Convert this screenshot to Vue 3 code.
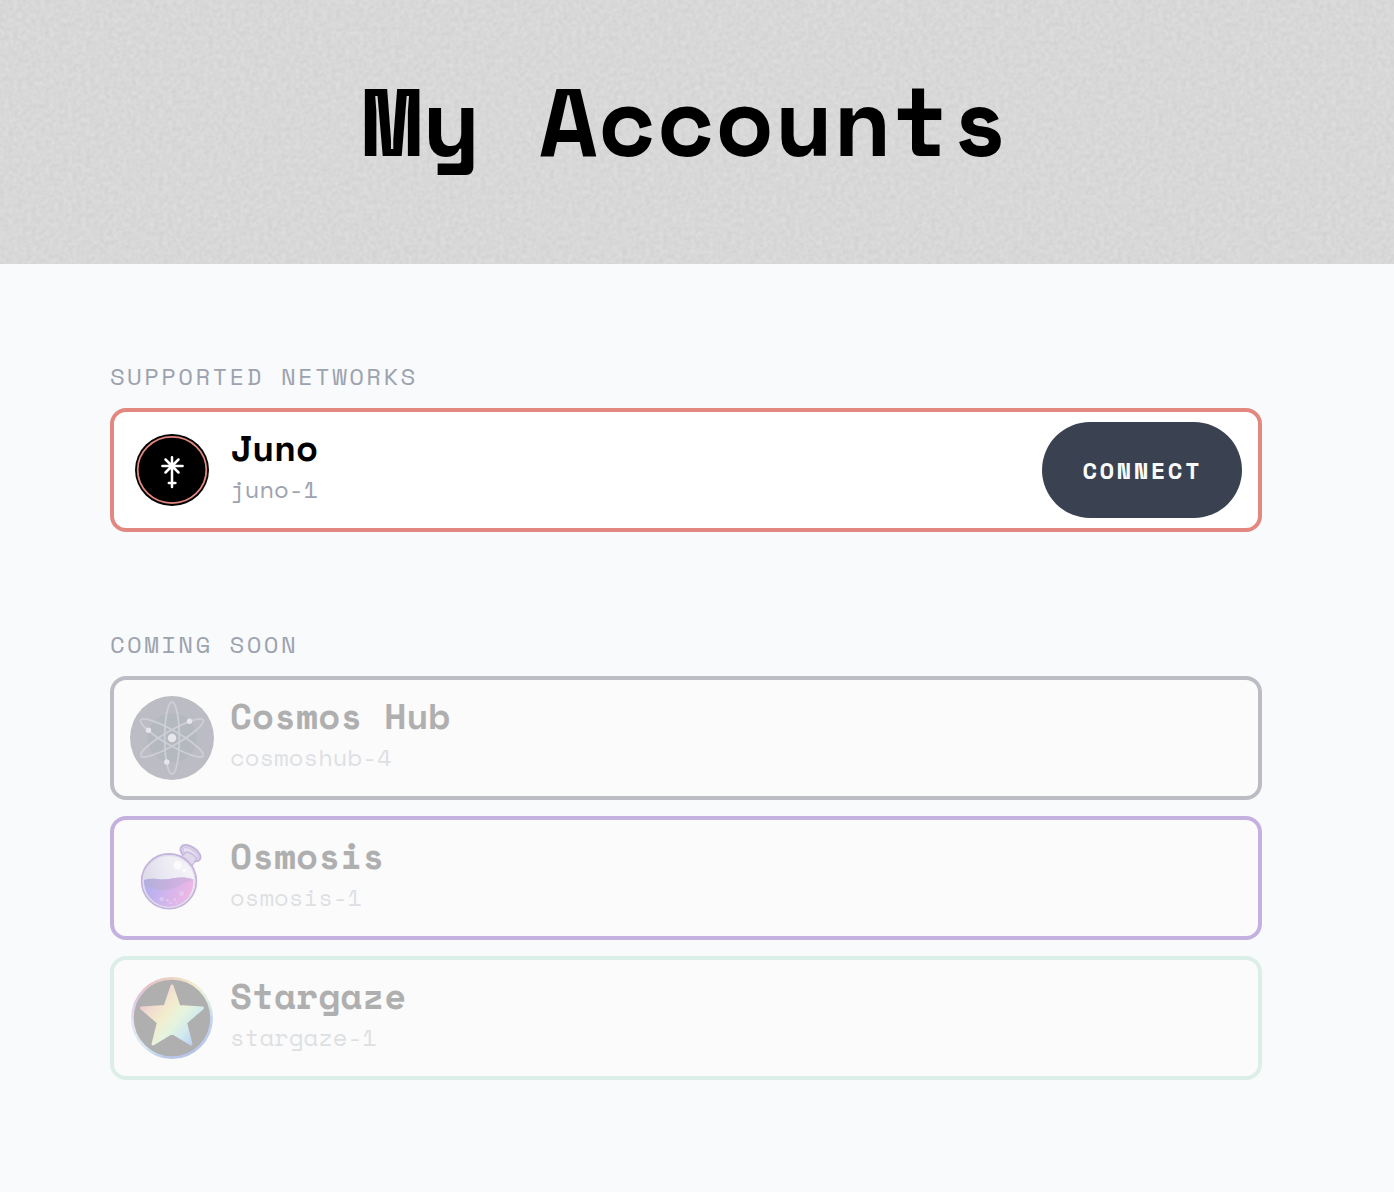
<script setup>
const sections = [
  {
    title: 'Supported Networks',
    networks: [{ id: 'juno-1', name: 'Juno', logo: 'juno', available: true }],
  },
  {
    title: 'Coming Soon',
    networks: [
      { id: 'cosmoshub-4', name: 'Cosmos Hub', logo: 'cosmos', available: false },
      { id: 'osmosis-1', name: 'Osmosis', logo: 'osmosis', available: false },
      { id: 'stargaze-1', name: 'Stargaze', logo: 'stargaze', available: false },
    ],
  },
]
</script>

<template>
  <div class="page">
    <header class="hero">
      <svg class="grain" aria-hidden="true">
        <filter id="grain" x="0" y="0" width="100%" height="100%" color-interpolation-filters="sRGB">
          <feTurbulence type="fractalNoise" baseFrequency="0.22" numOctaves="2" seed="4" />
          <feColorMatrix
            values="0.07 0 0 0 0.811
                    0.07 0 0 0 0.811
                    0.07 0 0 0 0.811
                    0 0 0 0 1"
          />
        </filter>
        <rect width="100%" height="100%" filter="url(#grain)" />
      </svg>
      <h1>My Accounts</h1>
    </header>

    <main class="content">
      <section v-for="section in sections" :key="section.title" class="section">
        <h2>{{ section.title }}</h2>
        <ul class="list">
          <li
            v-for="network in section.networks"
            :key="network.id"
            class="card"
            :class="[network.logo, { disabled: !network.available }]"
          >
            <svg v-if="network.logo === 'juno'" class="logo" viewBox="0 0 84 84" aria-hidden="true">
              <ellipse cx="42" cy="42" rx="37" ry="36" fill="#000" />
              <ellipse cx="42" cy="42" rx="34.3" ry="33.1" fill="none" stroke="#e28880" stroke-width="1.8" />
              <path
                d="M42 29.3V59M32.4 38h20.2M35.5 31.5l13 13M48.5 31.5l-13 13M38.8 55h6.6"
                fill="none"
                stroke="#fff"
                stroke-width="2.5"
                stroke-linecap="round"
              />
            </svg>

            <svg v-else-if="network.logo === 'cosmos'" class="logo" viewBox="0 0 84 84" aria-hidden="true">
              <circle cx="42" cy="42" r="42" fill="#2e3148" />
              <circle cx="42" cy="42" r="24.5" fill="#121e36" />
              <g fill="none" stroke="#666986" stroke-width="1.8">
                <ellipse cx="42" cy="42" rx="7.3" ry="36" />
                <ellipse cx="42" cy="42" rx="7.3" ry="36" transform="rotate(60 42 42)" />
                <ellipse cx="42" cy="42" rx="7.3" ry="36" transform="rotate(-60 42 42)" />
              </g>
              <g fill="#b7b9c8">
                <circle cx="42" cy="42" r="4.3" />
                <circle cx="59.5" cy="25.3" r="2.7" />
                <circle cx="18.5" cy="34.3" r="2.7" />
                <circle cx="36.8" cy="66" r="2.7" />
              </g>
            </svg>

            <svg v-else-if="network.logo === 'osmosis'" class="logo" viewBox="0 0 84 84" aria-hidden="true">
              <defs>
                <linearGradient id="glass" x1="0" y1="0.3" x2="1" y2="0">
                  <stop offset="0" stop-color="#9c93c4" />
                  <stop offset="0.45" stop-color="#d0cbe6" />
                  <stop offset="1" stop-color="#f0eefa" />
                </linearGradient>
                <linearGradient id="liquid" x1="0" y1="0.3" x2="1" y2="0.5">
                  <stop offset="0" stop-color="#0800d8" />
                  <stop offset="0.45" stop-color="#6a14d0" />
                  <stop offset="1" stop-color="#e01cb4" />
                </linearGradient>
                <linearGradient id="surface" x1="0" y1="0" x2="1" y2="0">
                  <stop offset="0" stop-color="#0c0090" />
                  <stop offset="1" stop-color="#9410ac" />
                </linearGradient>
              </defs>
              <ellipse
                cx="60.5" cy="17.2" rx="11.3" ry="6.4" transform="rotate(34 60.5 17.2)"
                fill="#8d78be" stroke="#4a0ca0" stroke-width="1.8"
              />
              <ellipse
                cx="60.5" cy="17.2" rx="8.6" ry="3.6" transform="rotate(34 60.5 17.2)"
                fill="#b5a8d6" stroke="#7a4bb5" stroke-width="1"
              />
              <path d="M51 21 56.5 16Q63 17 66.5 22.5L62 30Z" fill="#a08fc8" stroke="#5a1fa8" stroke-width="1.3" />
              <circle cx="39" cy="45.3" r="27.3" fill="url(#glass)" stroke="#4a0ca0" stroke-width="1.8" />
              <path
                d="M14 44Q22 42 31 43.5C42 44 50 38.5 63.5 43.5Q64 53 58.5 61.5 50 71 39 71T19.5 61.5Q13.5 53 14 44Z"
                fill="url(#liquid)"
              />
              <path
                d="M14 44Q22 42 31 43.5C42 44 50 38.5 63.5 43.5C58 45 53 48 47 51C36 56 22 54 15.5 49Z"
                fill="url(#surface)"
              />
              <circle cx="39" cy="45.3" r="25.9" fill="none" stroke="#9c98c0" stroke-width="1.1" />
              <g fill="#fff">
                <circle cx="47.7" cy="29.3" r="4.2" />
                <circle cx="54.5" cy="34.7" r="1.9" />
              </g>
              <g fill="#c994ee" opacity="0.5">
                <circle cx="31.8" cy="63" r="2.3" />
                <circle cx="37.5" cy="64.5" r="1.4" />
                <circle cx="40.5" cy="67" r="1.3" />
                <circle cx="44.5" cy="63.7" r="1.4" />
                <circle cx="46.5" cy="66.5" r="1" />
                <circle cx="51.5" cy="57.5" r="2.4" />
              </g>
            </svg>

            <span v-else class="logo halo">
              <svg viewBox="1 1 82 82" aria-hidden="true">
                <defs>
                  <linearGradient id="star" gradientUnits="userSpaceOnUse" x1="14" y1="22" x2="66" y2="64">
                    <stop offset="0" stop-color="#c8506e" />
                    <stop offset="0.2" stop-color="#e09a6c" />
                    <stop offset="0.4" stop-color="#e0d06a" />
                    <stop offset="0.6" stop-color="#b4e6a0" />
                    <stop offset="0.78" stop-color="#78c8d2" />
                    <stop offset="1" stop-color="#2f6fe6" />
                  </linearGradient>
                </defs>
                <circle cx="42" cy="42" r="38.3" fill="#000" />
                <path
                  d="M42 10 49 30.5 72.5 32 55.6 46.5 61 68 42 56.5 23 68 28.4 46.5 11.5 32 35 30.5Z"
                  fill="url(#star)"
                  stroke="url(#star)"
                  stroke-width="3"
                  stroke-linejoin="round"
                />
              </svg>
            </span>

            <div class="details">
              <h3>{{ network.name }}</h3>
              <p>{{ network.id }}</p>
            </div>
            <button v-if="network.available" type="button" class="connect">Connect</button>
          </li>
        </ul>
      </section>
    </main>
  </div>
</template>

<style>
body {
  margin: 0;
  background: #f9fafc;
}
</style>

<style scoped>
.page {
  font-family: "Space Mono", "DejaVu Sans Mono", monospace;
  color: #000;
}

h1,
h2,
h3,
p,
ul {
  margin: 0;
  padding: 0;
}

.hero {
  position: relative;
  padding: 72px 22px 96px 0;
  background: #d8d8d8;
  text-align: center;
}

.grain {
  position: absolute;
  inset: 0;
  width: 100%;
  height: 100%;
}

h1 {
  position: relative;
  font-size: 96px;
  line-height: 96px;
  font-weight: 700;
}

.content {
  display: flex;
  flex-direction: column;
  gap: 96px;
  padding: 96px 132px 112px 110px;
}

h2 {
  margin-bottom: 16px;
  color: #9ca3af;
  font-size: 24px;
  line-height: 32px;
  font-weight: 400;
  letter-spacing: 0.1em;
  text-transform: uppercase;
}

.list {
  display: flex;
  flex-direction: column;
  gap: 16px;
  list-style: none;
}

.card {
  position: relative;
  display: flex;
  align-items: center;
  gap: 16px;
  min-height: 116px;
  padding: 0 16px;
  border: 4px solid;
  border-radius: 16px;
  background: #fff;
}

/* Veil that fades networks which cannot be connected yet */
.card.disabled::after {
  content: "";
  position: absolute;
  inset: -6px;
  border-radius: 18px;
  background: rgba(250, 250, 250, 0.7);
}

.card.juno {
  border-color: #e28880;
}

.card.cosmos {
  border-color: #2e3148;
}

.card.osmosis {
  border-color: #4a08a4;
}

.card.stargaze {
  border-color: #94d4bc;
}

.logo {
  flex: none;
  display: block;
  box-sizing: border-box;
  width: 84px;
  height: 84px;
}

.halo {
  padding: 1px;
  border-radius: 50%;
  background: conic-gradient(#c87846, #e0d06a 35deg, #a0d8b0 65deg, #4678dc 95deg, #1446be 150deg, #285ac8 190deg, #8cc8dc 225deg, #c0a8e4 265deg, #a05ab4 295deg, #b44650 325deg, #c87846) content-box;
}

.halo svg {
  display: block;
}

.details {
  flex: 1;
  padding-bottom: 2px;
}

h3 {
  font-size: 36px;
  line-height: 40px;
  font-weight: 700;
}

.details p {
  color: #9ca3af;
  font-size: 24px;
  line-height: 42px;
}

.connect {
  height: 96px;
  padding: 0 40px;
  border: 0;
  border-radius: 48px;
  background: #3a4150;
  color: #f9fafb;
  font: inherit;
  font-size: 24px;
  font-weight: 700;
  letter-spacing: 0.1em;
  text-transform: uppercase;
  cursor: pointer;
}
</style>
